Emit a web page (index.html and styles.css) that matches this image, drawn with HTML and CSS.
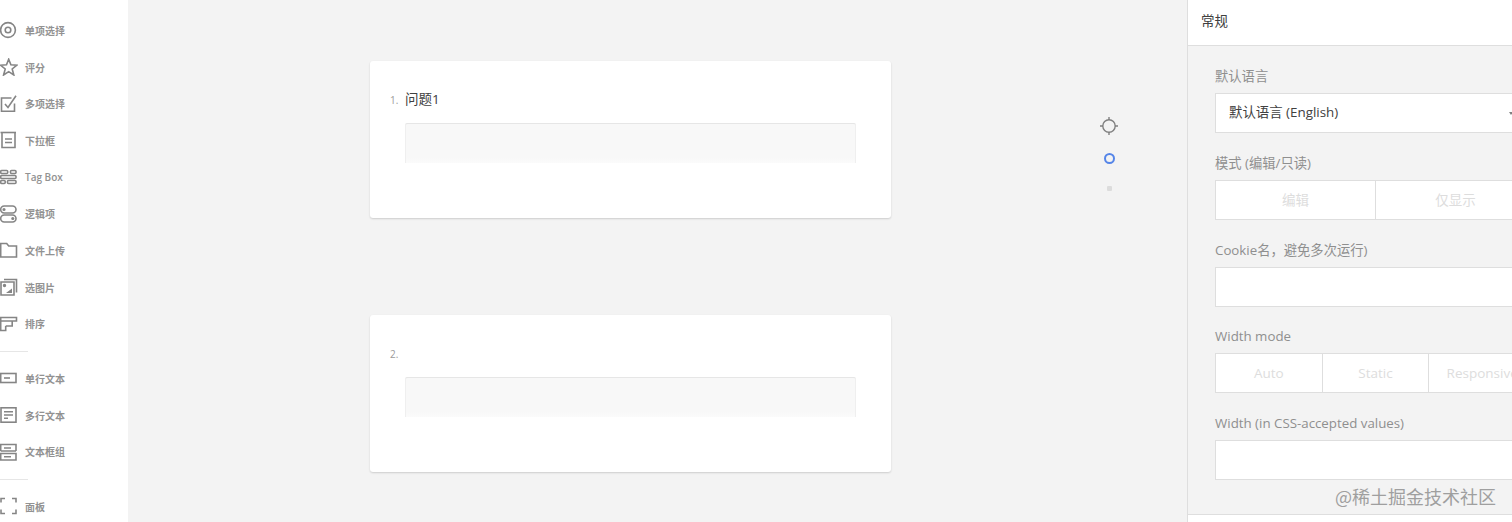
FILE: index.html
```html
<!DOCTYPE html>
<html lang="zh-CN">
<head>
    <meta charset="UTF-8">
    <meta name="viewport" content="width=device-width, initial-scale=1.0">
    <title>问卷设计器</title>
    <link rel="stylesheet" href="styles.css">
</head>
<body>
    <div class="app">
        <aside class="toolbox">
            <div class="tool"><svg class="ico" viewBox="0 0 18 18"><circle cx="8" cy="9" r="7.4"/><circle cx="8" cy="9" r="2.8"/></svg><span>单项选择</span></div>
            <div class="tool"><svg class="ico" viewBox="0 0 18 18"><path d="M8.7 1.2l2.2 5.6 6 .4-4.700 3.800 1.600 6-5.100-3.300-5.100 3.300 1.600-6L.5 7.200l6-.4z"/></svg><span>评分</span></div>
            <div class="tool"><svg class="ico" viewBox="0 0 18 18"><path d="M14.5 8.5v7.7H1.5V3h10"/><path d="M5 9l3 3.5L16 .8"/></svg><span>多项选择</span></div>
            <div class="tool"><svg class="ico" viewBox="0 0 18 18"><path d="M0.5 1.5h15.500"/><path d="M2 1.500v15h13v-15"/><path d="M5 8h7M5 11.500h7"/></svg><span>下拉框</span></div>
            <div class="tool"><svg class="ico" viewBox="0 0 18 18"><rect x="0.700" y="2.500" width="7" height="3" rx="1"/><rect x="10.500" y="2.500" width="5.500" height="3" rx="1"/><rect x="0.700" y="7.500" width="15.300" height="3" rx="1"/><rect x="0.700" y="12.500" width="4.500" height="3" rx="1"/><rect x="7.500" y="12.500" width="8.500" height="3" rx="1"/></svg><span>Tag Box</span></div>
            <div class="tool"><svg class="ico" viewBox="0 0 18 18"><rect x="0.700" y="1" width="15.300" height="7" rx="3.500"/><rect x="0.700" y="10" width="15.300" height="7" rx="3.500"/><circle cx="4" cy="4.500" r="0.800"/><circle cx="12.800" cy="13.500" r="0.800"/></svg><span>逻辑项</span></div>
            <div class="tool"><svg class="ico" viewBox="0 0 18 18"><path d="M.7 16V2.500h6l2 2.500h7.800v11z"/></svg><span>文件上传</span></div>
            <div class="tool"><svg class="ico" viewBox="0 0 18 18"><path d="M4 1.500h12.500v13"/><path d="M1 4h13v13H1z"/><circle cx="4.500" cy="7.500" r="0.900"/><path class="fill" d="M6 15l6-4.500V15z"/></svg><span>选图片</span></div>
            <div class="tool"><svg class="ico" viewBox="0 0 18 18"><path d="M.7 2.500h15.800v3.500H.7zM.7 6v9.500h5V11M5.700 11h6.500V6"/></svg><span>排序</span></div>
            <div class="sep"></div>
            <div class="tool"><svg class="ico" viewBox="0 0 18 18"><rect x="0.700" y="4.500" width="15.300" height="9"/><path d="M4 9h6"/></svg><span>单行文本</span></div>
            <div class="tool"><svg class="ico" viewBox="0 0 18 18"><rect x="1" y="1.800" width="15" height="14.400"/><path d="M4 5.800h9M4 9h9M4 12.300h4"/></svg><span>多行文本</span></div>
            <div class="tool"><svg class="ico" viewBox="0 0 18 18"><path d="M.7 8V1.500h15.300V8M.7 8h15.300M.7 10.500h15.300v6.500H.7z"/><path d="M4 5h7M4 13.800h7"/></svg><span>文本框组</span></div>
            <div class="sep"></div>
            <div class="tool"><svg class="ico" viewBox="0 0 18 18"><path d="M1 5.500V1.500h4M12 1.500h4v4M16 12.500v4h-4M5 16.500H1v-4"/></svg><span>面板</span></div>
        </aside>

        <main class="canvas">
            <div class="pages">
                <section class="card">
                    <div class="q-head"><span class="q-num">1.</span><span class="q-title">问题1</span></div>
                    <div class="q-input"></div>
                </section>
                <section class="card">
                    <div class="q-head"><span class="q-num">2.</span><span class="q-title"></span></div>
                    <div class="q-input"></div>
                </section>
            </div>
            <div class="view-tools">
                <svg class="target" viewBox="0 0 20 20"><circle cx="10" cy="10" r="6.200"/><path d="M10 1v3M10 16v3M1 10h3M16 10h3"/></svg>
                <span class="ring"></span>
                <span class="dot"></span>
            </div>
        </main>

        <aside class="props">
            <div class="props-head">常规</div>
            <div class="props-body">
                <label class="f-label">默认语言</label>
                <div class="f-box f-select">默认语言 (English)<span class="caret"></span></div>

                <label class="f-label">模式 (编辑/只读)</label>
                <div class="f-box seg seg-2"><span>编辑</span><span>仅显示</span></div>

                <label class="f-label">Cookie名，避免多次运行)</label>
                <div class="f-box"></div>

                <label class="f-label">Width mode</label>
                <div class="f-box seg seg-3"><span>Auto</span><span>Static</span><span>Responsive</span></div>

                <label class="f-label">Width (in CSS-accepted values)</label>
                <div class="f-box"></div>
            </div>
            <div class="props-foot"></div>
        </aside>
    </div>
    <div class="watermark">@稀土掘金技术社区</div>
</body>
</html>
```

FILE: styles.css
```css
* { box-sizing: border-box; }
html, body { margin: 0; height: 522px; overflow: hidden; }
body { font-family: "Open Sans", "Noto Sans CJK SC", sans-serif; background: #f3f3f3; color: #404040; }

.app { display: flex; height: 522px; }

/* left toolbox */
.toolbox { width: 128px; flex: none; background: #fff; padding-top: 12px; }
.tool { display: flex; align-items: center; height: 36.7px; font-size: 10px; font-weight: 600; color: #929292; }
.tool span { margin-left: 7px; }
.ico { width: 18px; height: 18px; flex: none; fill: none; stroke: #858585; stroke-width: 1.6; }
.ico .fill { fill: #858585; stroke: none; }
.sep { height: 17.900px; display: flex; align-items: center; }
.sep::before { content: ""; width: 28px; height: 1px; background: #e6e6e6; }

/* middle */
.canvas { flex: 1; display: flex; padding: 61px 0 0 242px; min-width: 0; }
.pages { width: 521px; flex: none; display: flex; flex-direction: column; gap: 97px; }
.card { height: 157px; background: #fff; border-radius: 3px; box-shadow: 0 1px 2px rgba(0,0,0,0.16); padding: 29px 35px 0 20px; }
.q-head { display: flex; align-items: center; height: 20px; }
.q-num { width: 15px; font-size: 10px; color: #9b9b9b; }
.q-title { font-size: 13.500px; color: #404040; margin-top: -4px; }
.q-input { height: 40px; margin: 13px 0 0 15px; border-radius: 2px 2px 0 0; background: linear-gradient(#f8f8f8 85%, #fbfbfb); border-top: 1px solid #e6e6e6; box-shadow: inset 1px 0 0 #efefef, inset -1px 0 0 #efefef; }

.view-tools { display: flex; flex-direction: column; align-items: center; width: 20px; margin: 55px 0 0 208px; }
.target { width: 20px; height: 20px; fill: none; stroke: #808080; stroke-width: 1.400; }
.ring { width: 11px; height: 11px; margin-top: 17px; border: 2px solid #5585e8; border-radius: 50%; }
.dot { width: 5px; height: 5px; margin-top: 22px; background: #dcdcdc; border-radius: 1px; }

/* right properties */
.props { width: 325px; flex: none; border-left: 1px solid #dedede; display: flex; flex-direction: column; overflow: hidden; }
.props-head { height: 46px; flex: none; background: #fff; border-bottom: 1px solid #dedede; padding: 0 13px; line-height: 43px; font-size: 13.500px; color: #404040; }
.props-body { height: 468px; flex: none; padding: 20px 0 0 27px; }
.props-foot { flex: 1; background: #fff; border-top: 1px solid #dedede; }

.f-label { display: block; height: 27px; line-height: 20px; font-size: 13.300px; color: #8f8f8f; }
.f-box { width: 322px; height: 40px; margin-bottom: 19.750px; background: #fff; border: 1px solid #dedede; }
.f-select { position: relative; padding-left: 13px; line-height: 37px; font-size: 13.400px; color: #404040; }
.caret { position: absolute; left: 293px; top: 18px; border: 2.500px solid transparent; border-top: 3px solid #808080; }
.seg { display: flex; }
.seg span { text-align: center; line-height: 38px; font-size: 13.500px; color: #dddddd; border-right: 1px solid #dedede; white-space: nowrap; }
.seg-2 span { width: 160px; }
.seg-3 span { width: 107px; }

.watermark { position: absolute; left: 1335px; top: 483px; font-size: 18px; line-height: 26px; color: #9f9f9f; font-family: "Noto Sans CJK SC", sans-serif; }
```
